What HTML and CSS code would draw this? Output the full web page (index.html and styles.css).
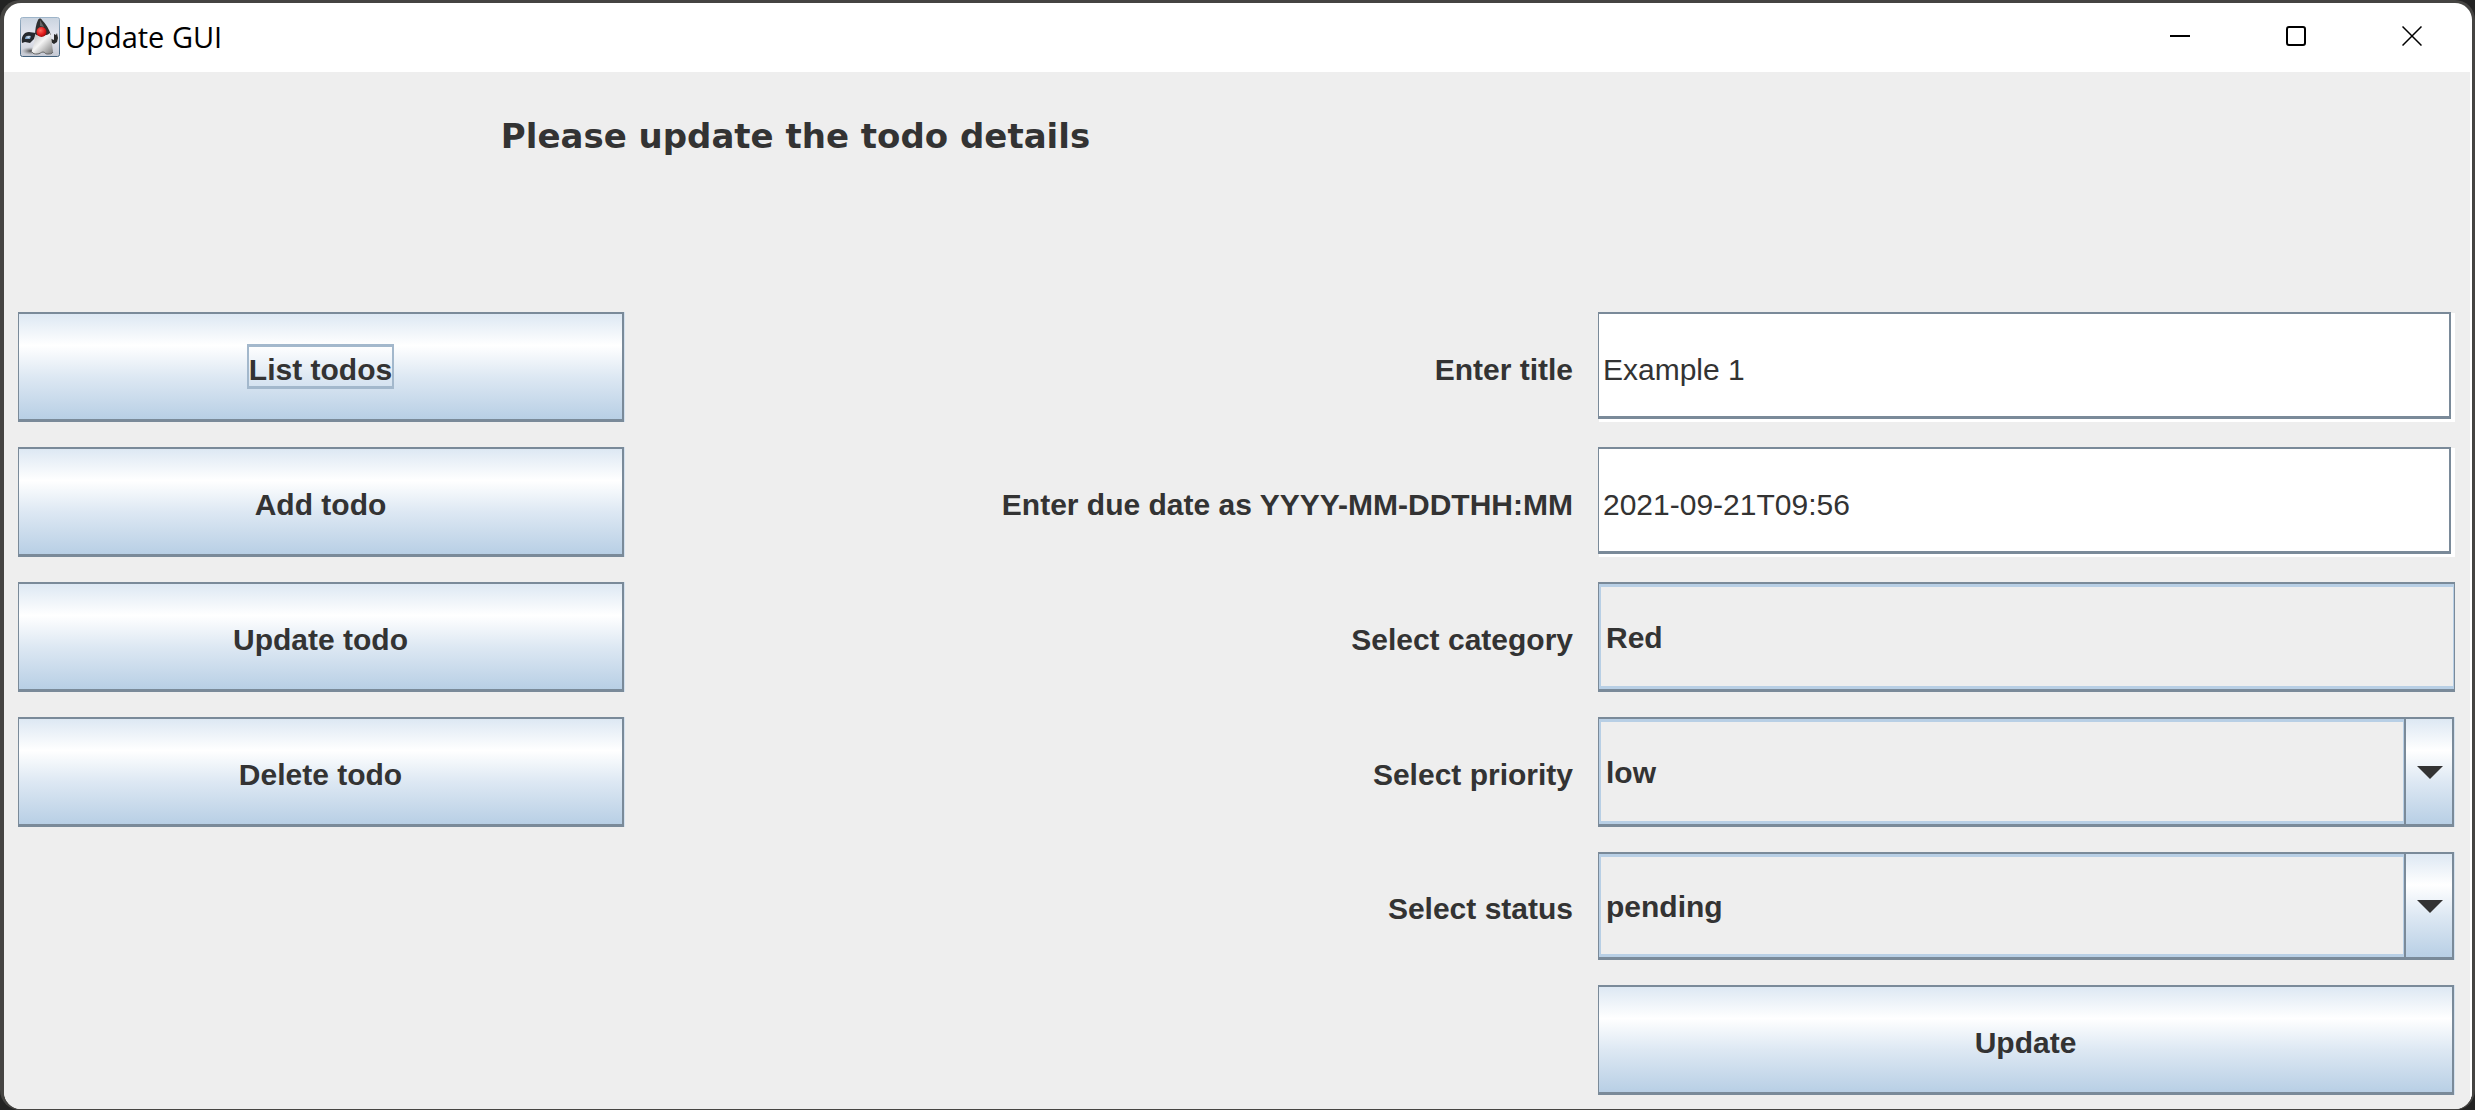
FILE: index.html
```html
<!DOCTYPE html>
<html lang="en">
<head>
<meta charset="utf-8">
<title>Update GUI</title>
<link rel="stylesheet" href="styles.css">
</head>
<body>
<div class="frame">
  <div class="window">
    <header class="titlebar">
      <svg class="app-icon" viewBox="0 0 40 40" aria-hidden="true">
        <defs>
          <linearGradient id="tile" x1="0" y1="0" x2="0" y2="1"><stop offset="0" stop-color="#c9d3df"/><stop offset=".5" stop-color="#e6e8f1"/><stop offset="1" stop-color="#c4c8d2"/></linearGradient>
          <linearGradient id="edge" x1="0" y1="0" x2="0" y2="1"><stop offset="0" stop-color="#9db4c9"/><stop offset="1" stop-color="#42617c"/></linearGradient>
          <linearGradient id="belly" x1="0" y1="0" x2="1" y2="1"><stop offset="0" stop-color="#b0b0b0"/><stop offset=".45" stop-color="#f4f4f4"/><stop offset="1" stop-color="#777"/></linearGradient>
          <radialGradient id="nose" cx=".4" cy=".35" r=".7"><stop offset="0" stop-color="#ff6a5c"/><stop offset=".6" stop-color="#e31b1b"/><stop offset="1" stop-color="#930c0c"/></radialGradient>
          <radialGradient id="shade"><stop offset="0" stop-color="#444"/><stop offset="1" stop-color="#999" stop-opacity="0"/></radialGradient>
        </defs>
        <rect x=".5" y=".5" width="39" height="39" rx="2" fill="url(#tile)" stroke="url(#edge)"/>
        <ellipse cx="11" cy="34" rx="10" ry="4" fill="url(#shade)"/>
        <path d="M2 26C1 19 4 15 9 15l7 1-2 6-4 4-5-1z" fill="#26292e"/>
        <path d="M5 22c0-3 2-4 6-3l-1 3z" fill="#7fa3c6"/>
        <path d="M6 20l4-1-1 2z" fill="#e8eef4"/>
        <path d="M29 21l5 2v-6l2 1 1-2 1 5-1 4-3 2-5-3z" fill="#292929"/>
        <path d="M18 3c1-2 3-2 4 0 4 4 7 9 9 15L15 19c0-6 1-12 3-16z" fill="#303030"/>
        <path d="M20 3l4 7-4-1z" fill="#666"/>
        <path d="M15 17c4 3 10 3 15-1 2 5 2 13 3 18 0 3-3 3-6 3-2 0-2-2-4-2s-3 2-6 2-6 0-5-4c2-5 3-10 3-16z" fill="url(#belly)"/>
        <path d="M12 35c1 2 3 2 5 2 3 0 4-2 6-2s2 2 4 2c3 0 5 0 6-2" fill="none" stroke="#666"/>
        <circle cx="21.500" cy="15" r="5" fill="url(#nose)"/>
      </svg>
      <span class="title">Update GUI</span>
      <div class="window-controls">
        <button type="button" class="window-button" aria-label="Minimize"><svg viewBox="0 0 20 20"><path d="M0 10h20"/></svg></button>
        <button type="button" class="window-button" aria-label="Maximize"><svg viewBox="0 0 20 20"><rect x="1" y="1" width="18" height="18" rx="2"/></svg></button>
        <button type="button" class="window-button" aria-label="Close"><svg viewBox="0 0 20 20"><path class="thin" d="M.5.5l19 19M19.500.5l-19 19"/></svg></button>
      </div>
    </header>
    <main class="panel">
      <div class="heading-row"><h1 class="heading">Please update the todo details</h1></div>
      <div class="content">
        <nav class="actions rows">
          <button type="button" class="button focused"><span class="caption">List todos</span></button>
          <button type="button" class="button"><span class="caption">Add todo</span></button>
          <button type="button" class="button"><span class="caption">Update todo</span></button>
          <button type="button" class="button"><span class="caption">Delete todo</span></button>
        </nav>
        <form class="details rows">
          <label class="label" for="todo-title">Enter title</label>
          <div class="text-well"><input class="text-field" id="todo-title" type="text" value="Example 1"></div>
          <label class="label" for="todo-due">Enter due date as YYYY-MM-DDTHH:MM</label>
          <div class="text-well"><input class="text-field" id="todo-due" type="text" value="2021-09-21T09:56"></div>
          <label class="label" for="todo-category">Select category</label>
          <div class="combo"><select class="select" id="todo-category"><option>Red</option></select></div>
          <label class="label" for="todo-priority">Select priority</label>
          <div class="combo with-arrow"><select class="select" id="todo-priority"><option>low</option></select><span class="arrow"><svg viewBox="0 0 26 13"><path d="M0 0h26L13 13z"/></svg></span></div>
          <label class="label" for="todo-status">Select status</label>
          <div class="combo with-arrow"><select class="select" id="todo-status"><option>pending</option></select><span class="arrow"><svg viewBox="0 0 26 13"><path d="M0 0h26L13 13z"/></svg></span></div>
          <button type="button" class="button submit"><span class="caption">Update</span></button>
        </form>
      </div>
    </main>
  </div>
</div>
</body>
</html>
```
FILE: styles.css
```css
:root {
  --steel: #7a8a99;
  --sky: #b8cfe5;
  --ink: #333;
  --surface: #eee;
  --ocean: linear-gradient(#dde8f3, #fff 30%, #dde8f3 60%, #b8cfe5);
}

* { box-sizing: border-box; }

body {
  margin: 0;
  background: #232323;
  color: var(--ink);
  font: bold 30px/33px "Liberation Sans", Arial, sans-serif;
}

.frame {
  display: flex;
  min-height: 100vh;
  padding: 3px 3px 1px 4px;
  border-radius: 20px;
  background: #454442;
}

.window {
  display: flex;
  flex-direction: column;
  flex: 1;
  overflow: hidden;
  border-radius: 17px;
  background: #fff;
}

.titlebar {
  display: flex;
  align-items: center;
  height: 69px;
  padding: 0 2px 0 16px;
}

.app-icon {
  width: 40px;
  height: 40px;
  margin-bottom: 2px;
}

.title {
  flex: 1;
  padding: 0 0 2px 5px;
  color: #000;
  font: 29px/40px "Open Sans", "Noto Sans", sans-serif;
}

.window-controls {
  display: flex;
  height: 100%;
}

.window-button {
  display: flex;
  align-items: center;
  justify-content: center;
  width: 116px;
  padding: 0 0 4px;
  border: 0;
  background: none;
}

.window-button svg {
  width: 20px;
  height: 20px;
  fill: none;
  stroke: #000;
  stroke-width: 2;
}

.window-button .thin { stroke-width: 1.500; }

.panel {
  flex: 1;
  padding: 0 15px 14px 14px;
  border-right: 2px solid #fff;
  background: var(--surface);
}

.heading-row {
  display: grid;
  grid-template-columns: 1555fr 857fr;
  column-gap: 25px;
  height: 240px;
  padding-top: 43px;
}

.heading {
  margin: 0;
  text-align: center;
  font: bold 34px/42px "DejaVu Sans", Verdana, sans-serif;
}

.content {
  display: grid;
  grid-template-columns: 607fr 1805fr;
  column-gap: 25px;
}

.rows {
  display: grid;
  grid-template-rows: repeat(4, 110px) 108px 110px;
  gap: 25px;
}

.details { grid-template-columns: 923fr 857fr; }

.button {
  display: flex;
  align-items: center;
  justify-content: center;
  margin: 0 1px 0 0;
  padding: 0;
  border: solid var(--steel);
  border-width: 2px 2px 3px 1px;
  background: var(--ocean);
  box-shadow: 1px 0 #d3e0ed;
  color: inherit;
  font: inherit;
}

.caption {
  padding: 6px 0 0;
  border: solid transparent;
  border-width: 3px 2px;
}

.focused .caption { border-color: #a3b8cc; }

.submit { grid-column: 2; }

.label {
  align-self: center;
  padding-top: 4px;
  text-align: right;
}

.text-well {
  display: flex;
  padding: 0 4px 3px 0;
  background: linear-gradient(#fff, #fff) 1px 1px no-repeat;
}

.text-field {
  flex: 1;
  min-width: 0;
  padding: 8px 4px 0;
  border: solid var(--steel);
  border-width: 2px 2px 3px 1px;
  background: #fff;
  color: inherit;
  font: inherit;
  font-weight: normal;
}

.combo {
  display: flex;
  border: solid var(--steel);
  border-width: 2px 1px 3px;
}

.select {
  appearance: none;
  flex: 1;
  min-width: 0;
  padding: 2px 5px 0;
  border: solid var(--sky);
  border-width: 3px 1px 3px 2px;
  border-radius: 0;
  background: var(--surface);
  color: inherit;
  font: inherit;
}

.with-arrow {
  margin-right: 1px;
  border-right-width: 2px;
  box-shadow: 1px 0 #d3e0ed;
}

.arrow {
  display: flex;
  align-items: center;
  justify-content: center;
  width: 48px;
  padding: 2px 0 0 2px;
  border-left: 2px solid var(--steel);
  background: var(--ocean);
}

.arrow svg {
  width: 26px;
  height: 13px;
  fill: var(--ink);
}
```
